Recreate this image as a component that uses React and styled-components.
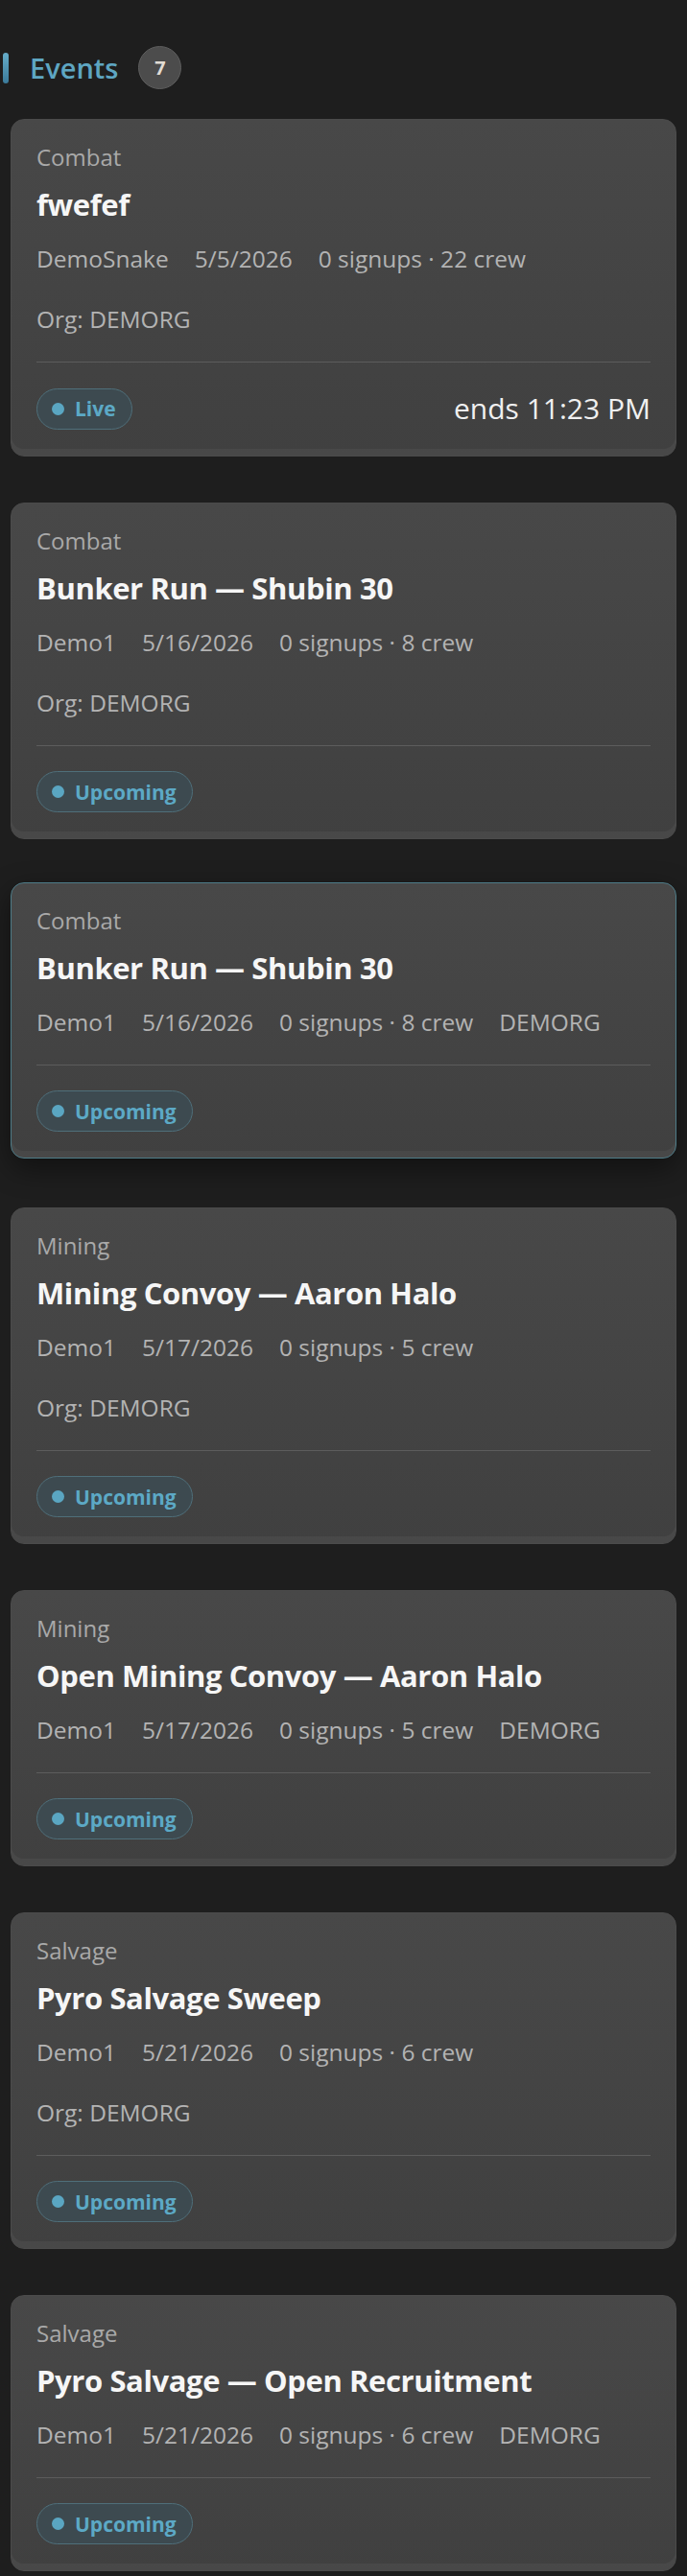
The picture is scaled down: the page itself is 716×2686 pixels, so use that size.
import React from 'react'
import styled, { createGlobalStyle, css } from 'styled-components'

const GlobalStyle = createGlobalStyle`
  html, body {
    margin: 0;
    padding: 0;
    background: #1e1e1e;
  }
  body {
    font-family: "Open Sans", "Noto Sans", sans-serif;
    color: #eee;
  }
`

const events = [
  { id: 1, type: 'Combat', title: 'fwefef', host: 'DemoSnake', date: '5/5/2026', crew: '0 signups · 22 crew', org: 'DEMORG', orgLine: true, status: 'Live', ends: 'ends 11:23 PM' },
  { id: 2, type: 'Combat', title: 'Bunker Run — Shubin 30', host: 'Demo1', date: '5/16/2026', crew: '0 signups · 8 crew', org: 'DEMORG', orgLine: true, status: 'Upcoming' },
  { id: 3, type: 'Combat', title: 'Bunker Run — Shubin 30', host: 'Demo1', date: '5/16/2026', crew: '0 signups · 8 crew', org: 'DEMORG', status: 'Upcoming', active: true },
  { id: 4, type: 'Mining', title: 'Mining Convoy — Aaron Halo', host: 'Demo1', date: '5/17/2026', crew: '0 signups · 5 crew', org: 'DEMORG', orgLine: true, status: 'Upcoming' },
  { id: 5, type: 'Mining', title: 'Open Mining Convoy — Aaron Halo', host: 'Demo1', date: '5/17/2026', crew: '0 signups · 5 crew', org: 'DEMORG', status: 'Upcoming' },
  { id: 6, type: 'Salvage', title: 'Pyro Salvage Sweep', host: 'Demo1', date: '5/21/2026', crew: '0 signups · 6 crew', org: 'DEMORG', orgLine: true, status: 'Upcoming' },
  { id: 7, type: 'Salvage', title: 'Pyro Salvage — Open Recruitment', host: 'Demo1', date: '5/21/2026', crew: '0 signups · 6 crew', org: 'DEMORG', status: 'Upcoming' },
]

const Page = styled.div`
  padding: 48px 11px 10px 11px;
`

const Header = styled.div`
  display: flex;
  align-items: center;
  height: 45px;
  margin: 0 0 31px -8px;
`

const Accent = styled.div`
  width: 6px;
  height: 32px;
  border-radius: 3px;
  background: linear-gradient(180deg, #66adc9, #3b7b9b);
  margin-right: 22px;
`

const Heading = styled.h2`
  margin: 0;
  font-size: 29px;
  font-weight: 600;
  line-height: 40px;
  color: #5ea6c2;
  margin-right: 21px;
`

const Count = styled.div`
  width: 43px;
  height: 43px;
  border-radius: 50%;
  background: #4c4c4c;
  border: 1px solid #5e5e5e;
  display: flex;
  align-items: center;
  justify-content: center;
  font-size: 20px;
  font-weight: 700;
  color: #e2dcd4;
`

const List = styled.div`
  display: flex;
  flex-direction: column;
  gap: 48px;
`

const Card = styled.div`
  background: linear-gradient(180deg, #484848 0%, #404040 100%);
  border: 1px solid #4b4b4b;
  border-radius: 14px;
  padding: 23px 26px 27px;
  box-shadow: inset 0 -7px 0 rgba(255, 255, 255, 0.045);
  ${p => p.$active && css`
    border: 1.5px solid #4e7c88;
    transform: translateY(-3px);
    box-shadow: inset 0 -7px 0 rgba(255, 255, 255, 0.045), 0 10px 30px rgba(0, 0, 0, 0.45);
  `}
`

const Category = styled.div`
  font-size: 24px;
  line-height: 32px;
  color: #a9a9a9;
`

const Title = styled.div`
  margin-top: 13px;
  font-size: 31px;
  line-height: 40px;
  font-weight: 700;
  color: #f6f6f6;
  letter-spacing: -0.4px;
`

const Meta = styled.div`
  margin-top: 21px;
  display: flex;
  flex-wrap: wrap;
  column-gap: 27px;
  font-size: 24.5px;
  line-height: 32px;
  color: #b3b3b3;
`

const OrgLine = styled.div`
  margin-top: 31px;
  font-size: 24.5px;
  line-height: 32px;
  color: #b3b3b3;
`

const Divider = styled.div`
  margin-top: 28px;
  height: 1px;
  background: #5c5c5c;
`

const Footer = styled.div`
  margin-top: 26px;
  display: flex;
  align-items: center;
  justify-content: space-between;
`

const Pill = styled.div`
  display: inline-flex;
  align-items: center;
  gap: 11px;
  height: 43px;
  box-sizing: border-box;
  padding: 0 16px 0 15px;
  border-radius: 22px;
  background: #3d4a50;
  border: 1.5px solid #4f6f7a;
  font-size: 21px;
  font-weight: 700;
  color: #5ca9c6;
`

const Dot = styled.span`
  width: 13px;
  height: 13px;
  border-radius: 50%;
  background: #5aa6c2;
`

const Ends = styled.div`
  font-size: 30px;
  line-height: 44px;
  color: #f0f0f0;
`

function EventCard({ ev }) {
  return (
    <Card $active={ev.active}>
      <Category>{ev.type}</Category>
      <Title>{ev.title}</Title>
      <Meta>
        <span>{ev.host}</span>
        <span>{ev.date}</span>
        <span>{ev.crew}</span>
        {!ev.orgLine && <span>{ev.org}</span>}
      </Meta>
      {ev.orgLine && <OrgLine>Org: {ev.org}</OrgLine>}
      <Divider />
      <Footer>
        <Pill>
          <Dot />
          {ev.status}
        </Pill>
        {ev.ends && <Ends>{ev.ends}</Ends>}
      </Footer>
    </Card>
  )
}

export default function App() {
  return (
    <Page>
      <GlobalStyle />
      <Header>
        <Accent />
        <Heading>Events</Heading>
        <Count>7</Count>
      </Header>
      <List>
        {events.map(ev => (
          <EventCard key={ev.id} ev={ev} />
        ))}
      </List>
    </Page>
  )
}
